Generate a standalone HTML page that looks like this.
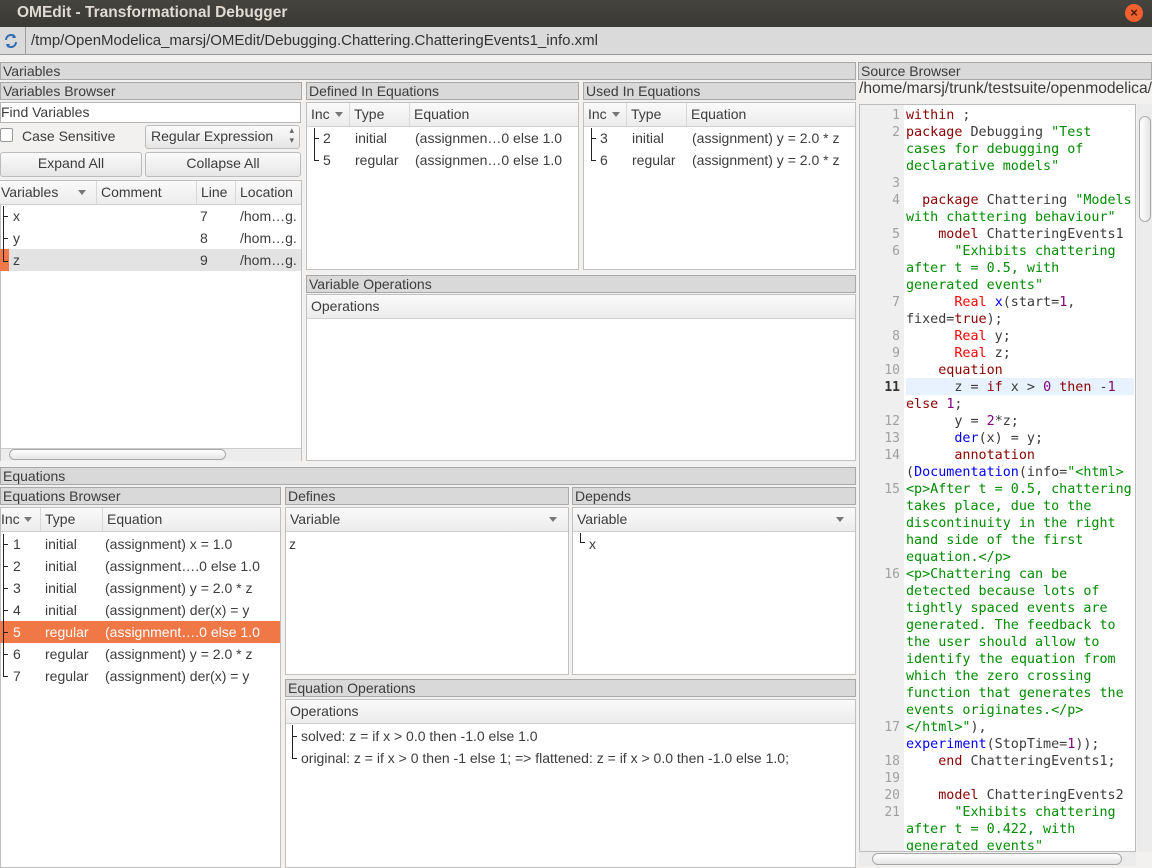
<!DOCTYPE html>
<html><head><meta charset="utf-8"><style>
*{box-sizing:border-box;margin:0;padding:0}
body{width:1152px;height:868px;overflow:hidden;background:#f2f1f0;font-family:"Liberation Sans",sans-serif;font-size:14px;color:#3c3c3c;position:relative}
.a{position:absolute;white-space:nowrap}
.bar{position:absolute;background:#d9d9d9;border:1px solid #a8a8a8;padding-left:2px;line-height:16px;font-size:14px;color:#3c3c3c}
.box{position:absolute;background:#fff;border:1px solid #c0c0c0}
.hdr{position:absolute;background:linear-gradient(#fafafa,#ececec);border-bottom:1px solid #cfcfcf;height:24px;line-height:23px}
.hc{position:absolute;top:0;height:23px;border-right:1px solid #d8d8d8;padding-left:4px}
.t{position:absolute;height:22px;line-height:22px}
.vl{position:absolute;border-left:1px solid #222}
.hl{position:absolute;border-top:1px solid #222;width:5px}
.arr{position:absolute;width:0;height:0;border-left:4px solid transparent;border-right:4px solid transparent;border-top:5px solid #777}
.btn{position:absolute;background:linear-gradient(#fbfbfb,#e6e6e6);border:1px solid #bcbcbc;border-radius:3px;text-align:center;line-height:21px}
.code{position:absolute;left:859px;top:104px;width:277px;height:748px;background:#fff;border:1px solid #bdbdbd;overflow:hidden;font-family:"DejaVu Sans Mono","Liberation Mono",monospace;font-size:13.4px}
.gut{position:absolute;left:0;top:0;width:44px;height:100%;background:#efefef}
.ln{position:absolute;left:0;height:17px;line-height:17px;white-space:pre;width:276px}
.ln b{font-weight:normal;display:inline-block;width:40px;text-align:right;color:#a0a0a0;margin-right:6px;font-size:13px}
.k{color:#8b0000}.r{color:#ff0000}.s{color:#008c00}.n{color:#800080}.f{color:#0000ff}.p{color:#000}
</style></head><body>
<div class="a" style="left:0;top:0;width:1152px;height:27px;background:linear-gradient(#45443f,#3a3935)"></div>
<div class="a" style="left:17px;top:4px;color:#dfdbd2;font-weight:bold;font-size:15.5px">OMEdit - Transformational Debugger</div>
<div class="a" style="left:1125px;top:4px;width:18px;height:18px;border-radius:50%;background:#f0612f;color:#4a1a08;font-size:13px;text-align:center;line-height:18px;font-weight:bold">×</div>
<div class="a" style="left:0;top:27px;width:1152px;height:28px;background:#dadada;border-bottom:1px solid #9a9a9a"></div>
<div class="a" style="left:25px;top:27px;height:28px;border-left:1px solid #a0a0a0"></div>
<svg class="a" style="left:3px;top:33px" width="16" height="16" viewBox="0 0 16 16"><path d="M3 7a5 5 0 0 1 9-3M13 9a5 5 0 0 1-9 3" stroke="#2f6db5" stroke-width="2" fill="none"/><path d="M11 1l2 4-4 0zM5 15l-2-4 4 0z" fill="#2f6db5"/></svg>
<div class="a" style="left:31px;top:32px;font-size:15px;color:#333">/tmp/OpenModelica_marsj/OMEdit/Debugging.Chattering.ChatteringEvents1_info.xml</div>

<div class="bar" style="left:0;top:62px;width:856px;height:18px">Variables</div>
<div class="bar" style="left:0;top:82px;width:302px;height:18px">Variables Browser</div>
<div class="box" style="left:0;top:102px;width:301px;height:21px;border-color:#b5b5b5"></div>
<div class="a" style="left:1px;top:104px">Find Variables</div>
<div class="a" style="left:0;top:128px;width:13px;height:14px;border:1px solid #999;background:#fff;border-radius:2px"></div>
<div class="a" style="left:22px;top:128px">Case Sensitive</div>
<div class="btn" style="left:145px;top:125px;width:155px;height:24px;text-align:left;padding-left:5px">Regular Expression<span style="position:absolute;right:5px;top:-1px;font-size:9px;line-height:10px;color:#666">▴<br>▾</span></div>
<div class="btn" style="left:0;top:152px;width:142px;height:25px">Expand All</div>
<div class="btn" style="left:145px;top:152px;width:156px;height:25px">Collapse All</div>
<div class="box" style="left:0;top:180px;width:302px;height:281px"></div>
<div class="hdr" style="left:0;top:181px;width:301px">
<div class="hc" style="left:0;width:97px;padding-left:1px">Variables</div><div class="arr" style="left:78px;top:9px"></div>
<div class="hc" style="left:97px;width:100px">Comment</div>
<div class="hc" style="left:197px;width:39px">Line</div>
<div class="hc" style="left:236px;width:65px;border:none">Location</div></div>
<div class="a" style="left:1px;top:249px;width:300px;height:22px;background:#e3e3e3"></div>
<div class="a" style="left:0;top:249px;width:9px;height:22px;background:#f07746"></div>
<div class="vl" style="left:3px;top:206px;height:56px"></div>
<div class="hl" style="left:3px;top:216px"></div><div class="hl" style="left:3px;top:238px"></div><div class="hl" style="left:3px;top:261px"></div>
<div class="t" style="left:13px;top:205px">x</div><div class="t" style="left:200px;top:205px">7</div><div class="t" style="left:240px;top:205px">/hom…g.</div>
<div class="t" style="left:13px;top:227px">y</div><div class="t" style="left:200px;top:227px">8</div><div class="t" style="left:240px;top:227px">/hom…g.</div>
<div class="t" style="left:13px;top:249px">z</div><div class="t" style="left:200px;top:249px">9</div><div class="t" style="left:240px;top:249px">/hom…g.</div>
<div class="a" style="left:1px;top:448px;width:300px;height:13px;background:#ececec;border-top:1px solid #ccc"></div>
<div class="a" style="left:9px;top:449px;width:217px;height:11px;border:1px solid #a8a8a8;border-radius:6px;background:linear-gradient(#fff,#e5e5e5)"></div>

<div class="bar" style="left:306px;top:82px;width:273px;height:18px">Defined In Equations</div>
<div class="box" style="left:306px;top:102px;width:273px;height:168px"></div>
<div class="hdr" style="left:307px;top:103px;width:271px">
<div class="hc" style="left:0;width:43px">Inc</div><div class="arr" style="left:28px;top:9px"></div>
<div class="hc" style="left:43px;width:60px">Type</div><div class="hc" style="left:103px;width:168px;border:none">Equation</div></div>
<div class="vl" style="left:314px;top:128px;height:33px"></div><div class="hl" style="left:314px;top:138px"></div><div class="hl" style="left:314px;top:160px"></div>
<div class="t" style="left:323px;top:127px">2</div><div class="t" style="left:355px;top:127px">initial</div><div class="t" style="left:415px;top:127px">(assignmen…0 else 1.0</div>
<div class="t" style="left:323px;top:149px">5</div><div class="t" style="left:355px;top:149px">regular</div><div class="t" style="left:415px;top:149px">(assignmen…0 else 1.0</div>

<div class="bar" style="left:583px;top:82px;width:273px;height:18px">Used In Equations</div>
<div class="box" style="left:583px;top:102px;width:273px;height:168px"></div>
<div class="hdr" style="left:584px;top:103px;width:271px">
<div class="hc" style="left:0;width:43px">Inc</div><div class="arr" style="left:28px;top:9px"></div>
<div class="hc" style="left:43px;width:60px">Type</div><div class="hc" style="left:103px;width:168px;border:none">Equation</div></div>
<div class="vl" style="left:591px;top:128px;height:33px"></div><div class="hl" style="left:591px;top:138px"></div><div class="hl" style="left:591px;top:160px"></div>
<div class="t" style="left:600px;top:127px">3</div><div class="t" style="left:632px;top:127px">initial</div><div class="t" style="left:692px;top:127px">(assignment) y = 2.0 * z</div>
<div class="t" style="left:600px;top:149px">6</div><div class="t" style="left:632px;top:149px">regular</div><div class="t" style="left:692px;top:149px">(assignment) y = 2.0 * z</div>

<div class="bar" style="left:306px;top:275px;width:550px;height:18px">Variable Operations</div>
<div class="box" style="left:306px;top:294px;width:550px;height:167px"></div>
<div class="hdr" style="left:307px;top:295px;width:548px"><div class="hc" style="left:0;width:548px;border:none">Operations</div></div>

<div class="bar" style="left:0;top:467px;width:856px;height:18px">Equations</div>
<div class="bar" style="left:0;top:487px;width:281px;height:18px">Equations Browser</div>
<div class="box" style="left:0;top:507px;width:281px;height:361px"></div>
<div class="hdr" style="left:1px;top:508px;width:279px">
<div class="hc" style="left:0;width:40px;padding-left:0">Inc</div><div class="arr" style="left:23px;top:9px"></div>
<div class="hc" style="left:40px;width:62px">Type</div><div class="hc" style="left:102px;width:177px;border:none">Equation</div></div>
<div class="a" style="left:0;top:621px;width:280px;height:22px;background:#f07746"></div>
<div class="vl" style="left:3px;top:534px;height:143px"></div>
<div class="hl" style="left:3px;top:544px"></div><div class="hl" style="left:3px;top:566px"></div><div class="hl" style="left:3px;top:588px"></div><div class="hl" style="left:3px;top:610px"></div><div class="hl" style="left:3px;top:632px"></div><div class="hl" style="left:3px;top:654px"></div><div class="hl" style="left:3px;top:676px"></div>
<div class="t" style="left:13px;top:533px">1</div><div class="t" style="left:45px;top:533px">initial</div><div class="t" style="left:105px;top:533px">(assignment) x = 1.0</div>
<div class="t" style="left:13px;top:555px">2</div><div class="t" style="left:45px;top:555px">initial</div><div class="t" style="left:105px;top:555px">(assignment….0 else 1.0</div>
<div class="t" style="left:13px;top:577px">3</div><div class="t" style="left:45px;top:577px">initial</div><div class="t" style="left:105px;top:577px">(assignment) y = 2.0 * z</div>
<div class="t" style="left:13px;top:599px">4</div><div class="t" style="left:45px;top:599px">initial</div><div class="t" style="left:105px;top:599px">(assignment) der(x) = y</div>
<div class="t" style="left:13px;top:621px;color:#fff">5</div><div class="t" style="left:45px;top:621px;color:#fff">regular</div><div class="t" style="left:105px;top:621px;color:#fff">(assignment….0 else 1.0</div>
<div class="t" style="left:13px;top:643px">6</div><div class="t" style="left:45px;top:643px">regular</div><div class="t" style="left:105px;top:643px">(assignment) y = 2.0 * z</div>
<div class="t" style="left:13px;top:665px">7</div><div class="t" style="left:45px;top:665px">regular</div><div class="t" style="left:105px;top:665px">(assignment) der(x) = y</div>

<div class="bar" style="left:285px;top:487px;width:284px;height:18px">Defines</div>
<div class="box" style="left:285px;top:507px;width:284px;height:168px"></div>
<div class="hdr" style="left:286px;top:508px;width:282px"><div class="hc" style="left:0;width:282px;border:none">Variable</div><div class="arr" style="left:263px;top:9px"></div></div>
<div class="t" style="left:289px;top:533px">z</div>

<div class="bar" style="left:572px;top:487px;width:284px;height:18px">Depends</div>
<div class="box" style="left:572px;top:507px;width:284px;height:168px"></div>
<div class="hdr" style="left:573px;top:508px;width:282px"><div class="hc" style="left:0;width:282px;border:none">Variable</div><div class="arr" style="left:263px;top:9px"></div></div>
<div class="vl" style="left:580px;top:533px;height:10px"></div><div class="hl" style="left:580px;top:542px"></div>
<div class="t" style="left:589px;top:533px">x</div>

<div class="bar" style="left:285px;top:679px;width:571px;height:18px">Equation Operations</div>
<div class="box" style="left:285px;top:699px;width:571px;height:169px"></div>
<div class="hdr" style="left:286px;top:700px;width:569px"><div class="hc" style="left:0;width:569px;border:none">Operations</div></div>
<div class="vl" style="left:292px;top:725px;height:33px"></div><div class="hl" style="left:292px;top:736px"></div><div class="hl" style="left:292px;top:758px"></div>
<div class="t" style="left:301px;top:725px">solved: z = if x &gt; 0.0 then -1.0 else 1.0</div>
<div class="t" style="left:301px;top:747px">original: z = if x &gt; 0 then -1 else 1; =&gt; flattened: z = if x &gt; 0.0 then -1.0 else 1.0;</div>

<div class="bar" style="left:858px;top:62px;width:294px;height:18px">Source Browser</div>
<div class="a" style="left:859px;top:80px;font-size:15.6px;width:293px;overflow:hidden">/home/marsj/trunk/testsuite/openmodelica/</div>
<div class="code"><div class="gut"></div>
<div class="a" style="left:46px;top:273px;width:228px;height:17px;background:#e8f2fe"></div>
<div class="ln" style="top:2px"><b>1</b><span class="k">within</span> ;</div>
<div class="ln" style="top:19px"><b>2</b><span class="k">package</span> Debugging <span class="s">"Test</span></div>
<div class="ln" style="top:36px"><b></b><span class="s">cases for debugging of</span></div>
<div class="ln" style="top:53px"><b></b><span class="s">declarative models"</span></div>
<div class="ln" style="top:70px"><b>3</b></div>
<div class="ln" style="top:87px"><b>4</b>  <span class="k">package</span> Chattering <span class="s">"Models</span></div>
<div class="ln" style="top:104px"><b></b><span class="s">with chattering behaviour"</span></div>
<div class="ln" style="top:121px"><b>5</b>    <span class="k">model</span> ChatteringEvents1</div>
<div class="ln" style="top:138px"><b>6</b>      <span class="s">"Exhibits chattering</span></div>
<div class="ln" style="top:155px"><b></b><span class="s">after t = 0.5, with</span></div>
<div class="ln" style="top:172px"><b></b><span class="s">generated events"</span></div>
<div class="ln" style="top:189px"><b>7</b>      <span class="r">Real</span> <span class="f">x</span>(start=<span class="n">1</span>,</div>
<div class="ln" style="top:206px"><b></b>fixed=<span class="k">true</span>);</div>
<div class="ln" style="top:223px"><b>8</b>      <span class="r">Real</span> y;</div>
<div class="ln" style="top:240px"><b>9</b>      <span class="r">Real</span> z;</div>
<div class="ln" style="top:257px"><b>10</b>    <span class="k">equation</span></div>
<div class="ln" style="top:274px"><b style="color:#333;font-weight:bold">11</b>      z = <span class="k">if</span> x &gt; <span class="n">0</span> <span class="k">then</span> -<span class="n">1</span></div>
<div class="ln" style="top:291px"><b></b><span class="k">else</span> <span class="n">1</span>;</div>
<div class="ln" style="top:308px"><b>12</b>      y = <span class="n">2</span>*z;</div>
<div class="ln" style="top:325px"><b>13</b>      <span class="f">der</span>(x) = y;</div>
<div class="ln" style="top:342px"><b>14</b>      <span class="k">annotation</span></div>
<div class="ln" style="top:359px"><b></b>(<span class="f">Documentation</span>(info=<span class="s">"&lt;html&gt;</span></div>
<div class="ln" style="top:376px"><b>15</b><span class="s">&lt;p&gt;After t = 0.5, chattering</span></div>
<div class="ln" style="top:393px"><b></b><span class="s">takes place, due to the</span></div>
<div class="ln" style="top:410px"><b></b><span class="s">discontinuity in the right</span></div>
<div class="ln" style="top:427px"><b></b><span class="s">hand side of the first</span></div>
<div class="ln" style="top:444px"><b></b><span class="s">equation.&lt;/p&gt;</span></div>
<div class="ln" style="top:461px"><b>16</b><span class="s">&lt;p&gt;Chattering can be</span></div>
<div class="ln" style="top:478px"><b></b><span class="s">detected because lots of</span></div>
<div class="ln" style="top:495px"><b></b><span class="s">tightly spaced events are</span></div>
<div class="ln" style="top:512px"><b></b><span class="s">generated. The feedback to</span></div>
<div class="ln" style="top:529px"><b></b><span class="s">the user should allow to</span></div>
<div class="ln" style="top:546px"><b></b><span class="s">identify the equation from</span></div>
<div class="ln" style="top:563px"><b></b><span class="s">which the zero crossing</span></div>
<div class="ln" style="top:580px"><b></b><span class="s">function that generates the</span></div>
<div class="ln" style="top:597px"><b></b><span class="s">events originates.&lt;/p&gt;</span></div>
<div class="ln" style="top:614px"><b>17</b><span class="s">&lt;/html&gt;"</span>),</div>
<div class="ln" style="top:631px"><b></b><span class="f">experiment</span>(StopTime=<span class="n">1</span>));</div>
<div class="ln" style="top:648px"><b>18</b>    <span class="k">end</span> ChatteringEvents1;</div>
<div class="ln" style="top:665px"><b>19</b></div>
<div class="ln" style="top:682px"><b>20</b>    <span class="k">model</span> ChatteringEvents2</div>
<div class="ln" style="top:699px"><b>21</b>      <span class="s">"Exhibits chattering</span></div>
<div class="ln" style="top:716px"><b></b><span class="s">after t = 0.422, with</span></div>
<div class="ln" style="top:733px"><b></b><span class="s">generated events"</span></div>
</div>
<div class="a" style="left:1137px;top:104px;width:15px;height:748px;background:#ececec"></div>
<div class="a" style="left:1139px;top:116px;width:12px;height:106px;border:1px solid #a8a8a8;border-radius:6px;background:linear-gradient(90deg,#fff,#e5e5e5)"></div>
<div class="a" style="left:859px;top:852px;width:277px;height:14px;background:#ececec"></div>
<div class="a" style="left:872px;top:853px;width:250px;height:12px;border:1px solid #a8a8a8;border-radius:6px;background:linear-gradient(#fff,#e5e5e5)"></div>
</body></html>
